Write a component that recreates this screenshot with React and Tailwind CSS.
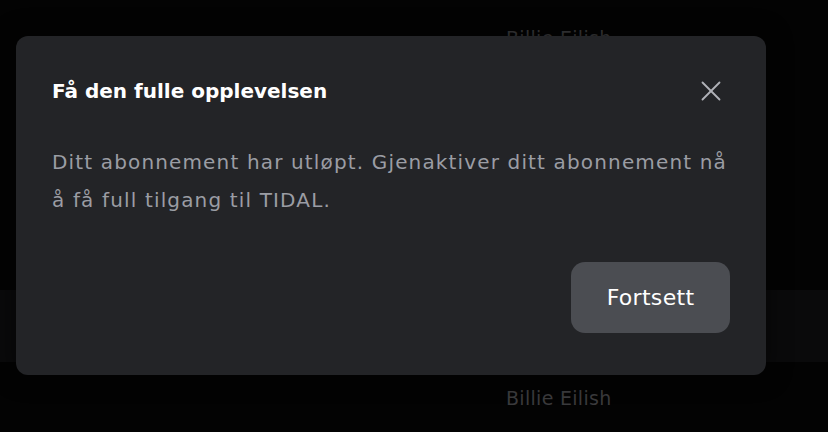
import { X } from 'lucide-react';

const rows = ['Billie Eilish', '', '', '', 'Billie Eilish', 'Billie Eilish'];

export default function App() {
  return (
    <div className="relative h-[432px] w-[828px] overflow-hidden bg-[#030303]" style={{ fontFamily: '"DejaVu Sans", sans-serif' }}>
      {/* track list behind the dialog */}
      <div className="flex flex-col pt-[2px]">
        {rows.map((name, i) => (
          <div
            key={i}
            className={`flex h-[72px] items-center pl-[506px] ${i === 4 ? 'bg-[#0a0a0b]' : ''}`}
          >
            <span className="text-[19px] tracking-[0.3px] text-[#3a3a3c]">{name}</span>
          </div>
        ))}
      </div>

      <div className="absolute left-[16px] top-[36px] flex h-[339px] w-[750px] flex-col rounded-[12px] bg-[#232427] px-[36px] pt-[36px] shadow-[0_0_24px_rgba(0,0,0,0.6)]">
        <div className="flex h-[38px] items-center justify-between">
          <h2 className="text-[20px] font-bold leading-[38px] text-white">Få den fulle opplevelsen</h2>
          <button className="mr-[7px] flex h-[24px] w-[24px] items-center justify-center text-[#b0b2b8]">
            <X size={34} strokeWidth={1.3} className="shrink-0" />
          </button>
        </div>
        <p className="mt-[33px] text-[20px] tracking-[1.15px] leading-[38px] text-[#9b9da4]">
          Ditt abonnement har utløpt. Gjenaktiver ditt abonnement nå å få full tilgang til TIDAL.
        </p>
        <div className="mt-auto mb-[42px] flex justify-end">
          <button className="flex h-[71px] w-[159px] items-center justify-center rounded-[14px] bg-[#4b4d52] text-[22px] tracking-[0.3px] text-white">
            Fortsett
          </button>
        </div>
      </div>
    </div>
  );
}
